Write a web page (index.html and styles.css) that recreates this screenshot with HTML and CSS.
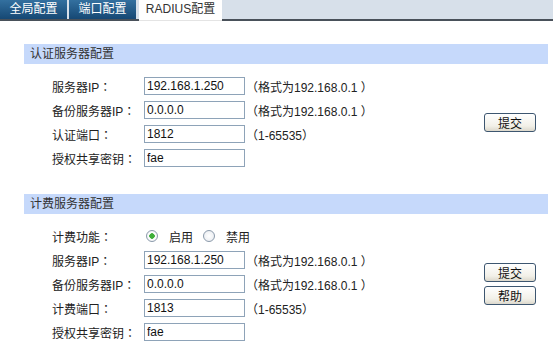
FILE: index.html
```
<html>
<head>
<link rel="stylesheet" href="styles.css">
<title>RADIUS配置</title>
</head>
<body>
	<div class="tabs">
		<a class="tab">全局配置</a>
		<a class="tab">端口配置</a>
		<a class="tab active">RADIUS配置</a>
	</div>

	<div class="content">
		<div class="section">
			<div class="title">认证服务器配置</div>
			<div class="panel">
				<div class="rows">
					<div class="row">
						<label>服务器IP：</label>
						<input type="text" value="192.168.1.250">
						<span class="hint">（格式为192.168.0.1 ）</span>
					</div>
					<div class="row">
						<label>备份服务器IP：</label>
						<input type="text" value="0.0.0.0">
						<span class="hint">（格式为192.168.0.1 ）</span>
					</div>
					<div class="row">
						<label>认证端口：</label>
						<input type="text" value="1812">
						<span class="hint">（1-65535）</span>
					</div>
					<div class="row">
						<label>授权共享密钥：</label>
						<input type="text" value="fae">
					</div>
				</div>
				<div class="buttons">
					<button class="btn">提交</button>
				</div>
			</div>
		</div>

		<div class="section">
			<div class="title">计费服务器配置</div>
			<div class="panel">
				<div class="rows">
					<div class="row">
						<label>计费功能：</label>
						<span class="radio checked"></span><span class="opt">启用</span>
						<span class="radio"></span><span class="opt">禁用</span>
					</div>
					<div class="row">
						<label>服务器IP：</label>
						<input type="text" value="192.168.1.250">
						<span class="hint">（格式为192.168.0.1 ）</span>
					</div>
					<div class="row">
						<label>备份服务器IP：</label>
						<input type="text" value="0.0.0.0">
						<span class="hint">（格式为192.168.0.1 ）</span>
					</div>
					<div class="row">
						<label>计费端口：</label>
						<input type="text" value="1813">
						<span class="hint">（1-65535）</span>
					</div>
					<div class="row">
						<label>授权共享密钥：</label>
						<input type="text" value="fae">
					</div>
				</div>
				<div class="buttons">
					<button class="btn">提交</button>
					<button class="btn">帮助</button>
				</div>
			</div>
		</div>
	</div>
</body>
</html>
```
FILE: styles.css
```
* {
  margin: 0;
  padding: 0;
  box-sizing: border-box;
}

body {
  font-family: "Liberation Sans", "Noto Sans CJK SC", sans-serif;
  font-size: 12px;
  color: #222;
  background: #fff;
  overflow: hidden;
}

.tabs {
  display: flex;
  height: 21px;
  background: #d7e0ea;
  border-bottom: 2px solid #49515a;
}

.tab {
  width: 67px;
  height: 19px;
  margin-right: 2px;
  color: #fff;
  line-height: 19px;
  text-align: center;
  background: linear-gradient(#33709f, #164874);
}

.tab.active {
  width: 83px;
  height: 21px;
  margin-left: 1px;
  margin-bottom: -2px;
  color: #333;
  background: #fff;
  border-bottom: 1px solid #e4e4e4;
}

.content {
  padding: 23px 5px 0 24px;
}

.section {
  margin-bottom: 24px;
}

.section:last-child {
  margin-bottom: 0;
}

.title {
  height: 20px;
  line-height: 20px;
  padding-left: 6px;
  color: #333;
  background: #c6d9fb;
}

.panel {
  display: flex;
  align-items: center;
  padding-top: 10px;
}

.rows {
  width: 460px;
  padding-left: 28px;
}

.row {
  display: flex;
  align-items: center;
  height: 24px;
}

.row label {
  width: 92px;
  font-family: "Liberation Sans", "Noto Sans CJK TC", sans-serif;
}

.row input {
  width: 101px;
  height: 18px;
  padding: 0 2px;
  border: 1px solid #8ea3b8;
  font-family: "Liberation Sans", sans-serif;
  font-size: 12px;
  color: #111;
}

.hint {
  margin-left: 1px;
}

.radio {
  width: 12px;
  height: 12px;
  margin-left: 2px;
  border: 1px solid #8b9aab;
  border-radius: 50%;
  background: radial-gradient(#fff, #e6e9ee);
}

.radio.checked {
  background: radial-gradient(#3fae3a 0, #3fae3a 2.5px, #fff 3px, #e6e9ee);
}

.opt {
  margin-left: 11px;
  margin-right: 8px;
}

.buttons {
  display: flex;
  flex-direction: column;
  gap: 4px;
}

.btn {
  width: 52px;
  height: 19px;
  font-family: "Noto Sans CJK SC", sans-serif;
  font-size: 12px;
  color: #111;
  border: 1px solid #3d5670;
  border-radius: 3px;
  background: linear-gradient(#fff, #f2f0e8 70%, #dcd8cc);
}
```
